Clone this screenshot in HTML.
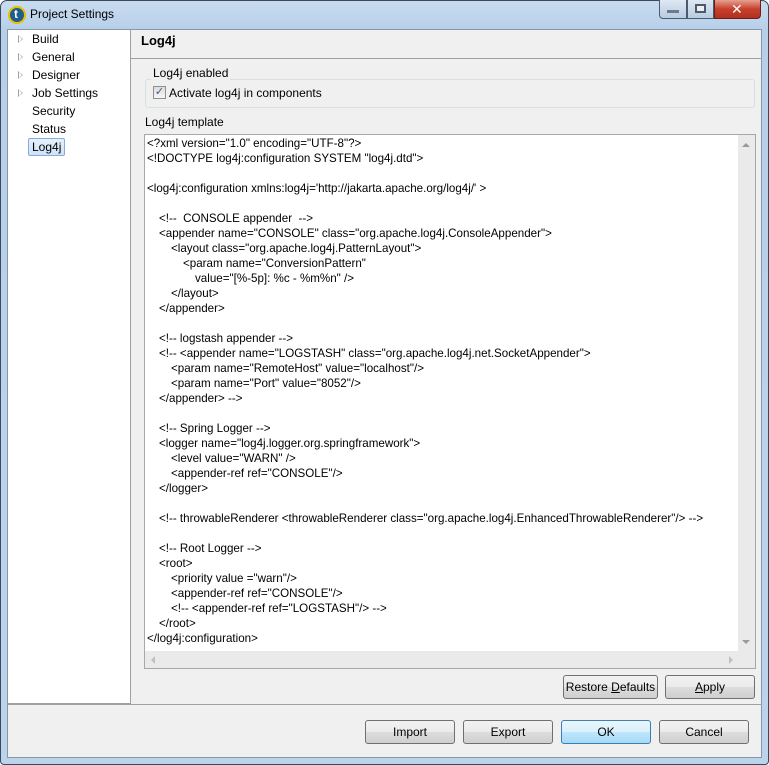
<!DOCTYPE html>
<html><head><style>
*{box-sizing:border-box;margin:0;padding:0}
body{width:769px;height:765px;overflow:hidden;font-family:"Liberation Sans","DejaVu Sans",sans-serif;font-size:12px;color:#000;background:#fff;position:relative}
.abs{position:absolute}
.frame{left:0;top:0;width:769px;height:765px;border:1px solid #3a4a5c;border-radius:7px 7px 4px 4px;background:linear-gradient(180deg,#c9dcef 0,#b7d0ea 28px,#bcd3ec 100%)}
.btn{position:absolute;height:24px;border:1px solid #707070;border-radius:3px;background:linear-gradient(#f2f2f2 0,#ebebeb 50%,#dddddd 51%,#cfcfcf 100%);text-align:center;line-height:22px;font-size:12px}
.line{position:absolute;left:147px;white-space:pre;height:15px;line-height:15px;font-size:11.6px}
.tree{position:absolute;left:32px;font-size:12px;line-height:18px}
.arr{position:absolute;left:18px;width:0;height:0;border-left:5px solid #fff;border-top:4px solid transparent;border-bottom:4px solid transparent}
</style></head><body>
<div class="abs frame"></div>
<!-- title -->
<div class="abs" style="left:8px;top:6px;width:18px;height:18px;border-radius:50%;background:#1e5e8c;border:2px solid #e8c000"></div>
<div class="abs" style="left:14px;top:7px;color:#fff;font-weight:bold;font-size:12px">t</div>
<div class="abs" style="left:30px;top:7px;font-size:12px;color:#000">Project Settings</div>
<div class="abs" style="left:659px;top:0;width:28px;height:19px;border:1px solid #4a5a70;border-top:none;border-radius:0 0 0 4px;background:linear-gradient(#dfe8f3,#b9cbe0)"></div>
<div class="abs" style="left:667px;top:10px;width:12px;height:3px;background:#6b7a8c"></div>
<div class="abs" style="left:687px;top:0;width:27px;height:19px;border:1px solid #4a5a70;border-top:none;background:linear-gradient(#dfe8f3,#b9cbe0)"></div>
<div class="abs" style="left:695px;top:4px;width:11px;height:9px;border:2px solid #4a5a70;background:#eee"></div>
<div class="abs" style="left:714px;top:0;width:47px;height:19px;border:1px solid #6a2018;border-top:none;border-radius:0 0 4px 0;background:linear-gradient(#e6a090,#c8402c 50%,#b03020)"></div>
<div class="abs" style="left:731px;top:1px;color:#fff;font-weight:bold;font-size:14px">✕</div>
<!-- client -->
<div class="abs" style="left:7px;top:29px;width:755px;height:729px;background:#f0f0f0;border:1px solid #8a96a6"></div>
<div class="abs" style="left:8px;top:30px;width:123px;height:674px;background:#fff;border-right:1px solid #a0a0a0;border-bottom:1px solid #a0a0a0"></div>
<div class="abs" style="left:8px;top:704px;width:754px;height:1px;background:#a0a0a0"></div>
<div class="abs" style="left:131px;top:58px;width:631px;height:1px;background:#a0a0a0"></div>
<div class="abs" style="left:141px;top:33px;font-weight:bold;font-size:13px">Log4j</div>
<!-- tree -->
<div class="arr" style="top:35px;border-left-color:#a0a0a0"></div><div class="arr" style="top:36px;left:19px;border-left:3px solid #fff;border-top-width:3px;border-bottom-width:3px"></div>
<div class="arr" style="top:53px;border-left-color:#a0a0a0"></div><div class="arr" style="top:54px;left:19px;border-left:3px solid #fff;border-top-width:3px;border-bottom-width:3px"></div>
<div class="arr" style="top:71px;border-left-color:#a0a0a0"></div><div class="arr" style="top:72px;left:19px;border-left:3px solid #fff;border-top-width:3px;border-bottom-width:3px"></div>
<div class="arr" style="top:89px;border-left-color:#a0a0a0"></div><div class="arr" style="top:90px;left:19px;border-left:3px solid #fff;border-top-width:3px;border-bottom-width:3px"></div>
<div class="tree" style="top:30px">Build</div>
<div class="tree" style="top:48px">General</div>
<div class="tree" style="top:66px">Designer</div>
<div class="tree" style="top:84px">Job Settings</div>
<div class="tree" style="top:102px">Security</div>
<div class="tree" style="top:120px">Status</div>
<div class="abs" style="left:28px;top:138px;width:37px;height:18px;border:1px solid #84acdd;border-radius:2px;background:linear-gradient(#e6f0fb,#cfe2f7)"></div>
<div class="tree" style="top:138px">Log4j</div>
<!-- group -->
<div class="abs" style="left:145px;top:79px;width:610px;height:29px;border:1px solid #d5dfe5;border-radius:3px"></div>
<div class="abs" style="left:151px;top:66px;padding:0 2px;background:#f0f0f0">Log4j enabled</div>
<div class="abs" style="left:153px;top:86px;width:13px;height:13px;border:1px solid #8f8f8f;background:linear-gradient(#dcdcdc,#f6f6f6);color:#3c5a8c;font-size:11px;line-height:11px;text-align:center">✓</div>
<div class="abs" style="left:169px;top:86px">Activate log4j in components</div>
<div class="abs" style="left:145px;top:115px">Log4j template</div>
<!-- text area -->
<div class="abs" style="left:144px;top:134px;width:612px;height:535px;background:#fff;border:1px solid #a8a8a8"></div>
<div class="abs" style="left:738px;top:135px;width:17px;height:516px;background:#eaeaea"></div>
<div class="abs" style="left:145px;top:651px;width:610px;height:17px;background:#eaeaea"></div>
<div class="abs" style="left:742px;top:143px;border-left:4px solid transparent;border-right:4px solid transparent;border-bottom:4px solid #9a9a9a"></div>
<div class="abs" style="left:742px;top:640px;border-left:4px solid transparent;border-right:4px solid transparent;border-top:4px solid #9a9a9a"></div>
<div class="abs" style="left:151px;top:656px;border-top:4px solid transparent;border-bottom:4px solid transparent;border-right:4px solid #c0c0c0"></div>
<div class="abs" style="left:729px;top:656px;border-top:4px solid transparent;border-bottom:4px solid transparent;border-left:4px solid #c0c0c0"></div>
<div class="line" style="top:136px">&lt;?xml version="1.0" encoding="UTF-8"?&gt;</div>
<div class="line" style="top:151px">&lt;!DOCTYPE log4j:configuration SYSTEM "log4j.dtd"&gt;</div>
<div class="line" style="top:181px">&lt;log4j:configuration xmlns:log4j='http://jakarta.apache.org/log4j/' &gt;</div>
<div class="line" style="top:211px;left:159px">&lt;!--  CONSOLE appender  --&gt;</div>
<div class="line" style="top:226px;left:159px">&lt;appender name="CONSOLE" class="org.apache.log4j.ConsoleAppender"&gt;</div>
<div class="line" style="top:241px;left:171px">&lt;layout class="org.apache.log4j.PatternLayout"&gt;</div>
<div class="line" style="top:256px;left:183px">&lt;param name="ConversionPattern"</div>
<div class="line" style="top:271px;left:195px">value="[%-5p]: %c - %m%n" /&gt;</div>
<div class="line" style="top:286px;left:171px">&lt;/layout&gt;</div>
<div class="line" style="top:301px;left:159px">&lt;/appender&gt;</div>
<div class="line" style="top:331px;left:159px">&lt;!-- logstash appender --&gt;</div>
<div class="line" style="top:346px;left:159px">&lt;!-- &lt;appender name="LOGSTASH" class="org.apache.log4j.net.SocketAppender"&gt;</div>
<div class="line" style="top:361px;left:171px">&lt;param name="RemoteHost" value="localhost"/&gt;</div>
<div class="line" style="top:376px;left:171px">&lt;param name="Port" value="8052"/&gt;</div>
<div class="line" style="top:391px;left:159px">&lt;/appender&gt; --&gt;</div>
<div class="line" style="top:421px;left:159px">&lt;!-- Spring Logger --&gt;</div>
<div class="line" style="top:436px;left:159px">&lt;logger name="log4j.logger.org.springframework"&gt;</div>
<div class="line" style="top:451px;left:171px">&lt;level value="WARN" /&gt;</div>
<div class="line" style="top:466px;left:171px">&lt;appender-ref ref="CONSOLE"/&gt;</div>
<div class="line" style="top:481px;left:159px">&lt;/logger&gt;</div>
<div class="line" style="top:511px;left:159px">&lt;!-- throwableRenderer &lt;throwableRenderer class="org.apache.log4j.EnhancedThrowableRenderer"/&gt; --&gt;</div>
<div class="line" style="top:541px;left:159px">&lt;!-- Root Logger --&gt;</div>
<div class="line" style="top:556px;left:159px">&lt;root&gt;</div>
<div class="line" style="top:571px;left:171px">&lt;priority value ="warn"/&gt;</div>
<div class="line" style="top:586px;left:171px">&lt;appender-ref ref="CONSOLE"/&gt;</div>
<div class="line" style="top:601px;left:171px">&lt;!-- &lt;appender-ref ref="LOGSTASH"/&gt; --&gt;</div>
<div class="line" style="top:616px;left:159px">&lt;/root&gt;</div>
<div class="line" style="top:631px">&lt;/log4j:configuration&gt;</div>
<!-- buttons -->
<div class="btn" style="left:563px;top:675px;width:95px">Restore <u>D</u>efaults</div>
<div class="btn" style="left:665px;top:675px;width:90px"><u>A</u>pply</div>
<div class="btn" style="left:365px;top:720px;width:90px">Import</div>
<div class="btn" style="left:463px;top:720px;width:90px">Export</div>
<div class="btn" style="left:561px;top:720px;width:90px;border-color:#3c7fb1;background:linear-gradient(#eaf6fd 0,#d9f0fc 50%,#bee6fd 51%,#a7d9f5 100%)">OK</div>
<div class="btn" style="left:659px;top:720px;width:90px">Cancel</div>
</body></html>
